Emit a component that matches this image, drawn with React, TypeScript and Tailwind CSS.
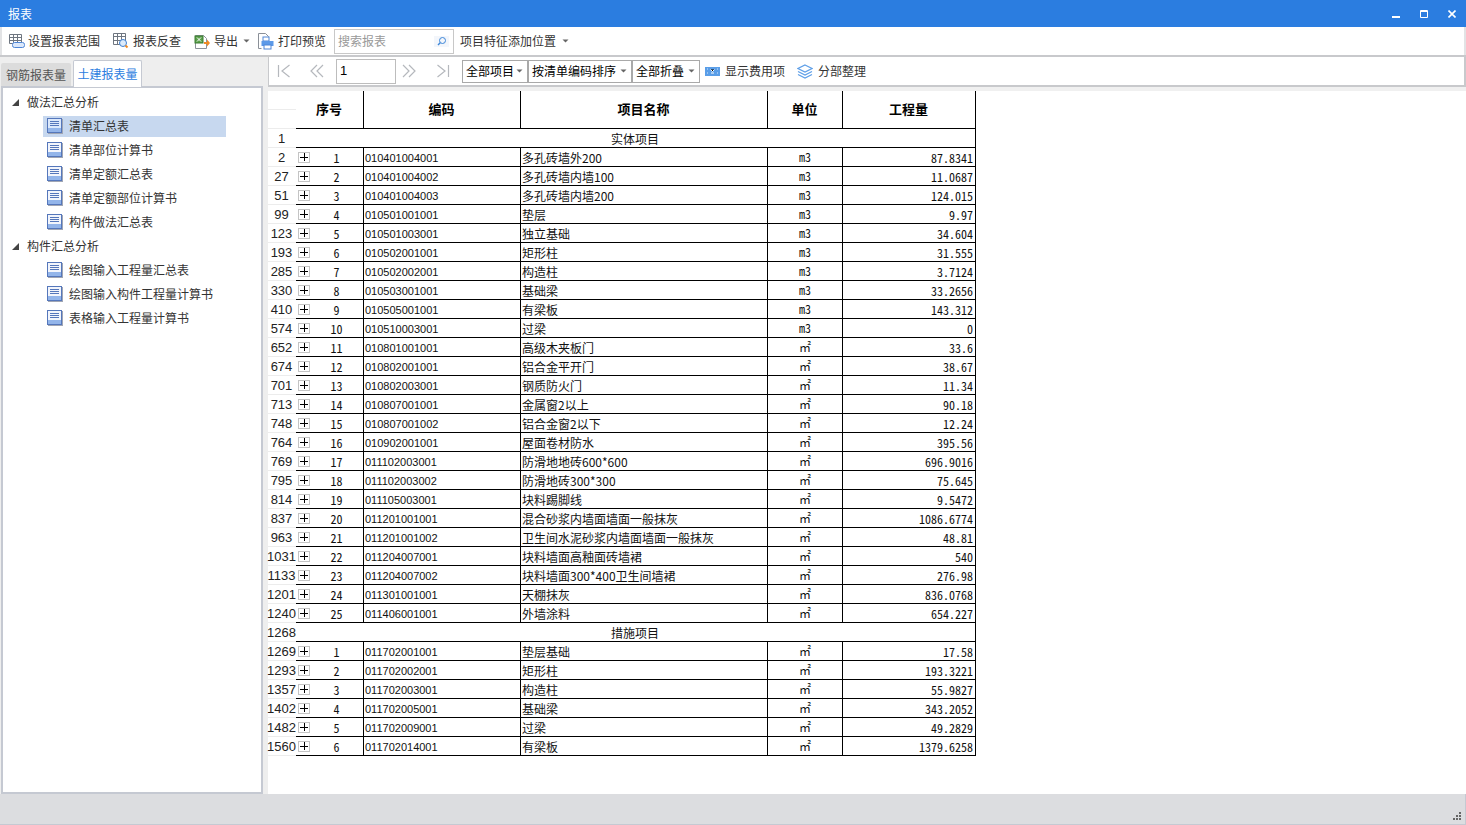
import { ReactNode } from "react";

type Row = [number, number, string, string, string, string];

const bodyA: Row[] = [
  [2, 1, "010401004001", "多孔砖墙外200", "m3", "87.8341"],
  [27, 2, "010401004002", "多孔砖墙内墙100", "m3", "11.0687"],
  [51, 3, "010401004003", "多孔砖墙内墙200", "m3", "124.015"],
  [99, 4, "010501001001", "垫层", "m3", "9.97"],
  [123, 5, "010501003001", "独立基础", "m3", "34.604"],
  [193, 6, "010502001001", "矩形柱", "m3", "31.555"],
  [285, 7, "010502002001", "构造柱", "m3", "3.7124"],
  [330, 8, "010503001001", "基础梁", "m3", "33.2656"],
  [410, 9, "010505001001", "有梁板", "m3", "143.312"],
  [574, 10, "010510003001", "过梁", "m3", "0"],
  [652, 11, "010801001001", "高级木夹板门", "㎡", "33.6"],
  [674, 12, "010802001001", "铝合金平开门", "㎡", "38.67"],
  [701, 13, "010802003001", "钢质防火门", "㎡", "11.34"],
  [713, 14, "010807001001", "金属窗2以上", "㎡", "90.18"],
  [748, 15, "010807001002", "铝合金窗2以下", "㎡", "12.24"],
  [764, 16, "010902001001", "屋面卷材防水", "㎡", "395.56"],
  [769, 17, "011102003001", "防滑地地砖600*600", "㎡", "696.9016"],
  [795, 18, "011102003002", "防滑地砖300*300", "㎡", "75.645"],
  [814, 19, "011105003001", "块料踢脚线", "㎡", "9.5472"],
  [837, 20, "011201001001", "混合砂浆内墙面墙面一般抹灰", "㎡", "1086.6774"],
  [963, 21, "011201001002", "卫生间水泥砂浆内墙面墙面一般抹灰", "㎡", "48.81"],
  [1031, 22, "011204007001", "块料墙面高釉面砖墙裙", "㎡", "540"],
  [1133, 23, "011204007002", "块料墙面300*400卫生间墙裙", "㎡", "276.98"],
  [1201, 24, "011301001001", "天棚抹灰", "㎡", "836.0768"],
  [1240, 25, "011406001001", "外墙涂料", "㎡", "654.227"],
];

const bodyB: Row[] = [
  [1269, 1, "011702001001", "垫层基础", "㎡", "17.58"],
  [1293, 2, "011702002001", "矩形柱", "㎡", "193.3221"],
  [1357, 3, "011702003001", "构造柱", "㎡", "55.9827"],
  [1402, 4, "011702005001", "基础梁", "㎡", "343.2052"],
  [1482, 5, "011702009001", "过梁", "㎡", "49.2829"],
  [1560, 6, "011702014001", "有梁板", "㎡", "1379.6258"],
];

const Caret = () => (
  <svg width="7" height="4" viewBox="0 0 7 4" className="shrink-0">
    <path d="M0.5 0.5h6L3.5 3.5z" fill="#666" />
  </svg>
);

const DocIcon = ({ active }: { active?: boolean }) => (
  <svg width="16" height="16" viewBox="0 0 16 16" className="shrink-0">
    <rect x="0.5" y="0.5" width="14" height="14" fill={active ? "#dbe8fb" : "#f2f5fc"} stroke="#5577bb" />
    <rect x="1" y="10" width="13" height="4" fill="#93b5ea" />
    <path d="M3 3.5h9M3 5.5h9M3 7.5h9" stroke="#5577bb" />
    <path d="M1 15.5h15M15.5 1v15" stroke="#a0a6b4" />
  </svg>
);

const GridIcon = () => (
  <svg width="17" height="16" viewBox="0 0 17 16" className="shrink-0">
    <path d="M1.5 1.5h12v9h-12zM1.5 4.5h12M1.5 7.5h12M5.5 1.5v9M9.5 1.5v9" fill="none" stroke="#6f7680" />
    <rect x="4.5" y="9.5" width="12" height="5" rx="2" fill="#dbe8fb" stroke="#4f86d6" />
  </svg>
);

const CheckIcon = () => (
  <svg width="17" height="17" viewBox="0 0 17 17" className="shrink-0">
    <path d="M0.5 0.5h12v11h-12zM0.5 3.5h12M4.5 0.5v11M8.5 0.5v11M0.5 7.5h12" fill="none" stroke="#6f7680" />
    <circle cx="10" cy="10" r="3.5" fill="#dcebfb" stroke="#3d7fd1" />
    <path d="M12.5 12.5l2 2" stroke="#f08a24" strokeWidth="2" />
  </svg>
);

const ExportIcon = () => (
  <svg width="16" height="17" viewBox="0 0 16 17" className="shrink-0">
    <path d="M1.5 2.5h8l3 3v10h-11z" fill="#fff" stroke="#8b9098" />
    <rect x="1" y="3" width="8" height="7" fill="#5aa04a" stroke="#3c7d33" />
    <path d="M3 4.5l4 4M7 4.5l-4 4" stroke="#fff" />
    <path d="M10 9h3V6.5l3 3.5-3 3.5V11h-3z" fill="#f08a24" />
  </svg>
);

const PrintIcon = () => (
  <svg width="16" height="17" viewBox="0 0 16 17" className="shrink-0">
    <path d="M0.5 0.5h7l3 3v3M0.5 0.5v15h3" fill="none" stroke="#8b9098" />
    <rect x="5" y="4" width="6" height="4" fill="#fff" stroke="#4f86d6" />
    <rect x="3.5" y="8" width="12" height="5" fill="#5d9ae8" />
    <rect x="6" y="12" width="7" height="4" fill="#fff" stroke="#4f86d6" />
  </svg>
);

const SearchIcon = () => (
  <svg width="15" height="11" viewBox="0 0 15 11" className="shrink-0">
    <rect width="15" height="11" fill="#f3f6fb" />
    <circle cx="8.5" cy="4.5" r="3" fill="none" stroke="#3d86d8" />
    <path d="M6.2 6.8L4 9" stroke="#3d86d8" strokeWidth="1.4" />
  </svg>
);

const FeeIcon = () => (
  <svg width="15" height="9" viewBox="0 0 15 9" className="shrink-0">
    <rect width="15" height="9" fill="#5a9ee8" />
    <path d="M5.5 2.5l2 2 2-2M6 6h3" stroke="#fff" />
    <path d="M2 2h1M12 2h1M2 6h1M12 6h1" stroke="#d5e6fa" />
  </svg>
);

const LayerIcon = () => (
  <svg width="16" height="15" viewBox="0 0 16 15" className="shrink-0">
    <g fill="none" stroke="#5e9fe8" strokeWidth="1.2">
      <path d="M8 1l7 3.5L8 8 1 4.5z" />
      <path d="M1 7.5L8 11l7-3.5" />
      <path d="M1 10.5L8 14l7-3.5" />
    </g>
  </svg>
);

const Pager = ({ d }: { d: string }) => (
  <svg width="14" height="14" viewBox="0 0 14 14" className="shrink-0">
    <path d={d} fill="none" stroke="#b5b8bd" strokeWidth="1.2" />
  </svg>
);

const Tool = ({ icon, label, className }: { icon: ReactNode; label: string; className: string }) => (
  <div className={`flex items-center ${className}`}>
    {icon}
    <span>{label}</span>
  </div>
);

const Select = ({ label, className }: { label: string; className: string }) => (
  <div className={`flex h-[23px] items-center justify-between border border-[#a9a9a9] bg-white pb-[1px] pl-[3px] pr-[4px] text-black ${className}`}>
    <span>{label}</span>
    <Caret />
  </div>
);

const TreeItem = ({ label, active }: { label: string; active?: boolean }) => (
  <div className="ml-[40px] h-[24px] w-[183px] pt-[2px]">
    <div className={`flex h-[21px] w-full items-center gap-[6px] pb-[1px] pl-[4px] ${active ? "bg-[#c7d8ef]" : ""}`}>
      <DocIcon active={active} />
      <span>{label}</span>
    </div>
  </div>
);

const TreeGroup = ({ label }: { label: string }) => (
  <div className="flex h-[24px] items-center">
    <svg width="7" height="7" viewBox="0 0 7 7" className="ml-[9px] shrink-0">
      <path d="M7 0v7H0z" fill="#444" />
    </svg>
    <span className="ml-[8px]">{label}</span>
  </div>
);

const RowNo = ({ value }: { value: number }) => (
  <div className="flex w-[28px] shrink-0 items-center justify-center border-b border-[#ececec] pr-[1px] text-[13px] leading-none text-[#222] [font-family:'Liberation_Sans',sans-serif]">
    {value}
  </div>
);

const DataRow = ({ row }: { row: Row }) => (
  <div className="flex h-[19px]">
    <RowNo value={row[0]} />
    <div className="flex w-[68px] shrink-0 items-center border-b border-r border-black pl-[2px]">
      <div className="relative flex h-[11px] w-[12px] shrink-0 items-center justify-center border border-[#c4c4c4] bg-white">
        <div className="absolute h-[1px] w-[8px] bg-black" />
        <div className="absolute h-[8px] w-[1px] bg-black" />
      </div>
      <span className="flex-1 pt-[1px] text-center leading-none text-[#111] [font-feature-settings:'hwid']">{row[1]}</span>
    </div>
    <div className="flex w-[157px] shrink-0 items-center border-b border-r border-black pl-[1px] pt-[2px] text-[11px] leading-none text-[#111] [font-family:'Liberation_Sans',sans-serif]">
      {row[2]}
    </div>
    <div className="flex w-[247px] shrink-0 items-center whitespace-nowrap border-b border-r border-black pl-[1px] pt-[1px] leading-none text-[#111]">
      {row[3]}
    </div>
    <div className="flex w-[75px] shrink-0 items-center justify-center border-b border-r border-black leading-none text-[#111] [font-feature-settings:'hwid']">
      {row[4]}
    </div>
    <div className="flex w-[133px] shrink-0 items-center justify-end border-b border-r border-black pr-[2px] pt-[1px] leading-none text-[#111] [font-feature-settings:'hwid']">
      {row[5]}
    </div>
  </div>
);

const SectionRow = ({ no, label }: { no: number; label: string }) => (
  <div className="flex h-[19px]">
    <RowNo value={no} />
    <div className="flex w-[680px] shrink-0 items-center justify-center border-b border-r border-black pt-[1px] pr-[1px] leading-none text-[#111]">
      {label}
    </div>
  </div>
);

const HeadCell = ({ label, className }: { label: string; className: string }) => (
  <div className={`flex shrink-0 items-center justify-center border-b border-r border-black pb-[2px] pr-[1px] text-[13px] font-bold text-black ${className}`}>
    {label}
  </div>
);

export default function App() {
  return (
    <div className="flex h-[825px] w-[1466px] flex-col overflow-hidden bg-[#eeeeee] text-[12px] text-[#333] [font-family:'Noto_Sans_CJK_SC','Liberation_Sans',sans-serif]">
      {/* title bar */}
      <div className="flex h-[27px] shrink-0 items-center bg-[#2b7de0] pl-[8px] text-white">
        <span>报表</span>
        <div className="ml-auto flex items-center gap-[20px] pr-[10px]">
          <svg width="8" height="8" viewBox="0 0 8 8"><rect y="6" width="8" height="2" fill="#fff" /></svg>
          <svg width="8" height="8" viewBox="0 0 8 8"><path d="M0.5 0.5h7v7h-7z M0 1.5h8" fill="none" stroke="#fff" /></svg>
          <svg width="8" height="8" viewBox="0 0 8 8"><path d="M0.5 0.5l7 7M7.5 0.5l-7 7" stroke="#fff" strokeWidth="1.6" /></svg>
        </div>
      </div>

      {/* main toolbar */}
      <div className="flex h-[28px] shrink-0 items-center border-l-2 border-r-2 border-[#e2e3e5] bg-white pl-[6px]">
        <Tool icon={<GridIcon />} label="设置报表范围" className="gap-[3px]" />
        <Tool icon={<CheckIcon />} label="报表反查" className="ml-[13px] gap-[3px]" />
        <Tool icon={<ExportIcon />} label="导出" className="ml-[13px] gap-[4px]" />
        <div className="ml-[5px]"><Caret /></div>
        <Tool icon={<PrintIcon />} label="打印预览" className="ml-[8px] gap-[4px]" />
        <div className="ml-[8px] flex h-[25px] w-[120px] items-center justify-between border border-[#c8c8c8] pl-[3px] pr-[4px] text-[#999]">
          <span>搜索报表</span>
          <SearchIcon />
        </div>
        <span className="ml-[6px]">项目特征添加位置</span>
        <div className="ml-[6px]"><Caret /></div>
      </div>
      <div className="h-[2px] shrink-0 bg-[#c8c9cc]" />

      <div className="flex min-h-0 flex-1">
        {/* left panel */}
        <div className="flex w-[264px] shrink-0 flex-col">
          <div className="flex h-[29px] shrink-0 items-end pl-[1px]">
            <div className="flex h-[23px] w-[70px] items-center justify-center rounded-t-[2px] bg-[#dcdcdc] text-[#555]">钢筋报表量</div>
            <div className="relative z-10 -mb-[1px] ml-[2px] flex h-[27px] w-[69px] items-center justify-center rounded-t-[2px] border border-b-0 border-[#c5c9d2] bg-white text-[#2b7de0]">土建报表量</div>
          </div>
          <div className="ml-[1px] h-[708px] w-[262px] border-2 border-[#c5c9d2] bg-white pt-[2px]">
            <TreeGroup label="做法汇总分析" />
            <TreeItem label="清单汇总表" active />
            <TreeItem label="清单部位计算书" />
            <TreeItem label="清单定额汇总表" />
            <TreeItem label="清单定额部位计算书" />
            <TreeItem label="构件做法汇总表" />
            <TreeGroup label="构件汇总分析" />
            <TreeItem label="绘图输入工程量汇总表" />
            <TreeItem label="绘图输入构件工程量计算书" />
            <TreeItem label="表格输入工程量计算书" />
          </div>
        </div>

        {/* right panel */}
        <div className="ml-[4px] flex min-w-0 flex-1 flex-col">
          <div className="flex h-[30px] shrink-0 items-center border-b-2 border-l border-r-2 border-[#c8c9cc] bg-white">
            <div className="ml-[8px]"><Pager d="M1.5 1v12M12.5 1L5 7l7.5 6" /></div>
            <div className="ml-[19px]"><Pager d="M7 1L1 7l6 6M13 1L7 7l6 6" /></div>
            <div className="ml-[12px] flex h-[25px] w-[60px] items-center border border-[#bdbdbd] pl-[3px] text-[13px] text-black [font-family:'Liberation_Sans',sans-serif]">1</div>
            <div className="ml-[6px]"><Pager d="M1 1l6 6-6 6M7 1l6 6-6 6" /></div>
            <div className="ml-[20px]"><Pager d="M1.5 1L9 7l-7.5 6M12.5 1v12" /></div>
            <Select label="全部项目" className="ml-[12px] w-[66px]" />
            <Select label="按清单编码排序" className="w-[104px]" />
            <Select label="全部折叠" className="w-[68px]" />
            <Tool icon={<FeeIcon />} label="显示费用项" className="ml-[5px] gap-[5px]" />
            <Tool icon={<LayerIcon />} label="分部整理" className="ml-[12px] gap-[5px]" />
          </div>
          <div className="flex-1 bg-white">
            <div className="h-[4px] bg-[#f0f0f0]" />
            <div className="flex h-[38px]">
              <div className="flex w-[28px] shrink-0 flex-col">
                <div className="h-[19px] border-b border-[#ececec]" />
                <div className="h-[19px] border-b border-[#ececec]" />
              </div>
              <HeadCell label="序号" className="w-[68px]" />
              <HeadCell label="编码" className="w-[157px]" />
              <HeadCell label="项目名称" className="w-[247px]" />
              <HeadCell label="单位" className="w-[75px]" />
              <HeadCell label="工程量" className="w-[133px]" />
            </div>
            <SectionRow no={1} label="实体项目" />
            {bodyA.map((row) => (
              <DataRow key={row[0]} row={row} />
            ))}
            <SectionRow no={1268} label="措施项目" />
            {bodyB.map((row) => (
              <DataRow key={row[0]} row={row} />
            ))}
          </div>
        </div>
      </div>

      {/* status bar */}
      <div className="flex h-[31px] shrink-0 items-end justify-end border-b border-r border-[#c5c9d2] bg-[#dcdde0] pb-[3px] pr-[3px]">
        <svg width="10" height="9" viewBox="0 0 10 9">
          <path d="M7 0h2v2H7zM4 3h2v2H4zM7 3h2v2H7zM1 6h2v2H1zM4 6h2v2H4zM7 6h2v2H7z" fill="#666" />
        </svg>
      </div>
    </div>
  );
}
